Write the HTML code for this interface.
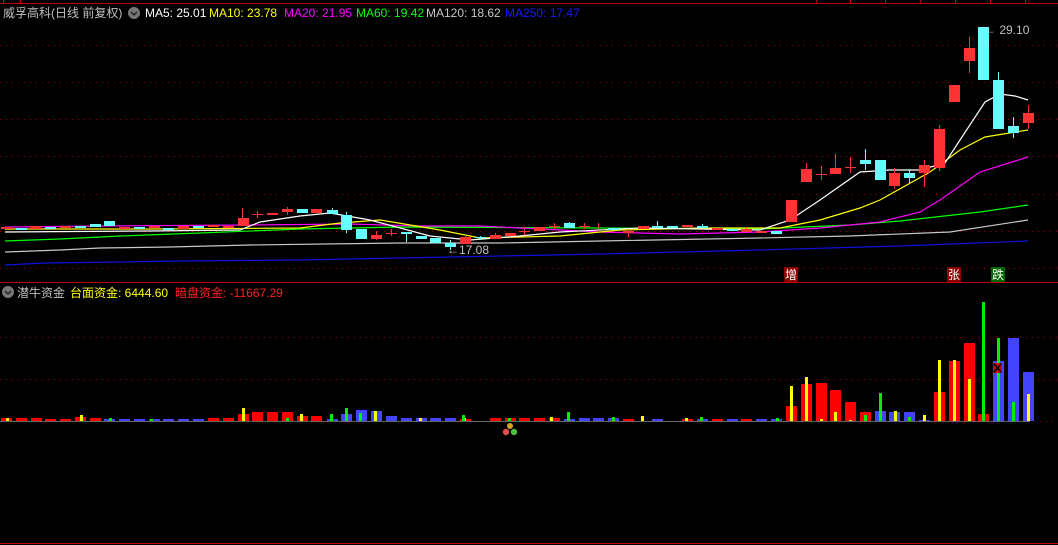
<!DOCTYPE html>
<html><head><meta charset="utf-8"><style>
html,body{margin:0;padding:0;background:#000;width:1058px;height:545px;overflow:hidden}
svg{display:block}
text{font-family:"Liberation Sans","Noto Sans CJK SC",sans-serif;font-size:12px}
</style></head><body>
<svg width="1058" height="545" viewBox="0 0 1058 545" xmlns="http://www.w3.org/2000/svg" shape-rendering="crispEdges">
<rect width="1058" height="545" fill="#000"/>
<!-- top border -->
<line x1="0" y1="3.5" x2="1058" y2="3.5" stroke="#c00000"/>
<g stroke="#c00000"><line x1="3.5" y1="0" x2="3.5" y2="3"/><line x1="20.5" y1="0" x2="20.5" y2="3"/><line x1="816.5" y1="0" x2="816.5" y2="3"/><line x1="850.5" y1="0" x2="850.5" y2="3"/><line x1="885.5" y1="0" x2="885.5" y2="3"/><line x1="920.5" y1="0" x2="920.5" y2="3"/><line x1="955.5" y1="0" x2="955.5" y2="3"/><line x1="990.5" y1="0" x2="990.5" y2="3"/><line x1="1025.5" y1="0" x2="1025.5" y2="3"/></g>
<!-- grid -->
<g stroke="#a00000" stroke-dasharray="1 5">
<line x1="0" y1="45.5" x2="1058" y2="45.5"/><line x1="0" y1="82.5" x2="1058" y2="82.5"/><line x1="0" y1="119.5" x2="1058" y2="119.5"/><line x1="0" y1="156.5" x2="1058" y2="156.5"/><line x1="0" y1="194.5" x2="1058" y2="194.5"/><line x1="0" y1="231.5" x2="1058" y2="231.5"/><line x1="0" y1="268.5" x2="1058" y2="268.5"/>
<line x1="0" y1="337.5" x2="1058" y2="337.5"/><line x1="0" y1="379.5" x2="1058" y2="379.5"/><line x1="1028" y1="421.5" x2="1058" y2="421.5"/>
</g>
<line x1="0" y1="282.5" x2="1058" y2="282.5" stroke="#c00000"/>
<line x1="0" y1="543.5" x2="1058" y2="543.5" stroke="#c00000"/>
<line x1="0" y1="421.5" x2="1030" y2="421.5" stroke="#666"/>

<!-- MA lines -->
<g fill="none" stroke-width="1.2" shape-rendering="auto">
<polyline stroke="#1010e0" points="5,265 45,263 120,262 180,261 300,260 400,258 600,254 760,250 900,246 1028,241"/>
<polyline stroke="#c8c8c8" points="5,252 60,250 100,248 170,247 250,245 400,243 500,243 600,241 760,238 850,236 950,232 1028,220"/>
<polyline stroke="#00ff00" points="5,241 60,239 120,236 200,233 300,229 400,227 600,228 760,229 850,225 900,221 980,212 1028,205"/>
<polyline stroke="#ff00ff" points="5,227 100,226 250,225 350,224 420,226 480,226 600,232 680,234 760,232 820,228 880,222 920,212 940,200 980,172 1028,157"/>
<polyline stroke="#ffff00" points="5,229 150,229 300,228 340,223 380,220 440,230 480,238 560,236 620,230 700,228 780,228 820,220 860,208 880,200 930,172 960,150 985,137 1028,130"/>
<polyline stroke="#ffffff" points="5,232 150,231 240,230 260,222 300,216 330,213 370,220 430,236 470,240 520,236 560,232 640,228 700,229 760,230 790,220 820,200 860,172 890,170 920,170 945,163 960,140 985,102 1000,94 1015,96 1028,100"/>
</g>

<!-- candles -->
<g>
<!-- left small candles -->
<g fill="#ff3333"><rect x="1" y="227" width="11" height="2"/><rect x="30" y="226" width="11" height="3"/><rect x="60" y="226" width="11" height="2"/><rect x="119" y="227" width="11" height="2"/><rect x="149" y="226" width="11" height="2"/><rect x="178" y="226" width="11" height="3"/><rect x="208" y="225" width="11" height="2"/><rect x="223" y="226" width="11" height="2"/></g>
<g fill="#66ffff"><rect x="16" y="228" width="11" height="2"/><rect x="45" y="227" width="11" height="2"/><rect x="75" y="226" width="11" height="2"/><rect x="90" y="224" width="11" height="3"/><rect x="104" y="221" width="11" height="5"/><rect x="134" y="227" width="11" height="2"/><rect x="163" y="228" width="11" height="2"/><rect x="193" y="226" width="11" height="2"/></g>
<!-- red bodies -->
<g fill="#ff3333">
<rect x="238" y="218" width="11" height="8"/><rect x="242" y="208" width="1" height="10"/>
<rect x="252" y="214" width="11" height="1"/><rect x="257" y="211" width="1" height="7"/>
<rect x="267" y="213" width="11" height="2"/>
<rect x="282" y="209" width="11" height="3"/><rect x="287" y="207" width="1" height="8"/>
<rect x="311" y="209" width="11" height="4"/>
<rect x="371" y="235" width="11" height="4"/><rect x="376" y="231" width="1" height="9"/>
<rect x="386" y="233" width="11" height="1"/><rect x="391" y="229" width="1" height="7"/>
<rect x="460" y="237" width="11" height="7"/><rect x="465" y="235" width="1" height="3"/>
<rect x="490" y="235" width="11" height="4"/><rect x="495" y="233" width="1" height="3"/>
<rect x="505" y="233" width="11" height="3"/>
<rect x="519" y="231" width="11" height="1"/><rect x="524" y="227" width="1" height="8"/>
<rect x="534" y="227" width="11" height="4"/>
<rect x="549" y="226" width="11" height="1"/><rect x="554" y="223" width="1" height="6"/>
<rect x="579" y="226" width="11" height="1"/><rect x="584" y="223" width="1" height="6"/>
<rect x="598" y="223" width="1" height="5"/>
<rect x="623" y="231" width="11" height="2"/><rect x="628" y="229" width="1" height="8"/>
<rect x="638" y="226" width="11" height="3"/>
<rect x="682" y="225" width="11" height="2"/>
<rect x="712" y="228" width="11" height="2"/>
<rect x="741" y="229" width="11" height="3"/><rect x="746" y="227" width="1" height="6"/>
<rect x="756" y="231" width="11" height="2"/>
<rect x="786" y="200" width="11" height="22"/>
<rect x="801" y="169" width="11" height="13"/><rect x="806" y="163" width="1" height="6"/>
<rect x="816" y="174" width="11" height="1"/><rect x="821" y="166" width="1" height="14"/>
<rect x="830" y="168" width="11" height="6"/><rect x="835" y="154" width="1" height="14"/>
<rect x="845" y="167" width="11" height="1"/><rect x="850" y="157" width="1" height="16"/>
<rect x="889" y="173" width="11" height="13"/><rect x="894" y="168" width="1" height="21"/>
<rect x="919" y="165" width="11" height="8"/><rect x="924" y="160" width="1" height="27"/>
<rect x="934" y="129" width="11" height="39"/><rect x="939" y="125" width="1" height="46"/>
<rect x="949" y="85" width="11" height="17"/>
<rect x="964" y="48" width="11" height="13"/><rect x="969" y="37" width="1" height="36"/>
<rect x="1023" y="113" width="11" height="10"/><rect x="1028" y="105" width="1" height="24"/>
</g>
<g fill="#66ffff">
<rect x="297" y="209" width="11" height="4"/>
<rect x="327" y="210" width="11" height="4"/><rect x="332" y="208" width="1" height="2"/>
<rect x="341" y="215" width="11" height="15"/><rect x="346" y="212" width="1" height="21"/>
<rect x="356" y="229" width="11" height="10"/>
<rect x="401" y="232" width="11" height="2"/><rect x="406" y="232" width="1" height="10"/>
<rect x="416" y="236" width="11" height="3"/>
<rect x="430" y="238" width="11" height="5"/>
<rect x="445" y="243" width="11" height="4"/><rect x="450" y="240" width="1" height="10"/>
<rect x="475" y="237" width="11" height="1"/><rect x="480" y="236" width="1" height="4"/>
<rect x="564" y="223" width="11" height="5"/><rect x="569" y="222" width="1" height="1"/>
<rect x="608" y="228" width="11" height="2"/>
<rect x="652" y="226" width="11" height="2"/><rect x="657" y="221" width="1" height="5"/>
<rect x="667" y="226" width="11" height="2"/>
<rect x="697" y="226" width="11" height="2"/><rect x="702" y="224" width="1" height="2"/>
<rect x="727" y="229" width="11" height="2"/>
<rect x="771" y="231" width="11" height="3"/>
<rect x="860" y="160" width="11" height="4"/><rect x="865" y="149" width="1" height="21"/>
<rect x="875" y="160" width="11" height="20"/>
<rect x="904" y="173" width="11" height="5"/><rect x="909" y="169" width="1" height="14"/>
<rect x="978" y="27" width="11" height="53"/>
<rect x="993" y="80" width="11" height="49"/><rect x="998" y="72" width="1" height="8"/>
<rect x="1008" y="126" width="11" height="7"/><rect x="1013" y="117" width="1" height="21"/>
</g>
</g>
<!-- labels -->
<text x="447" y="254" fill="#c0c0c0">←17.08</text>
<text x="984" y="34" fill="#c0c0c0">← 29.10</text>
<rect x="784" y="267" width="14" height="15" fill="#8b0000"/><text x="785" y="279" fill="#fff">增</text>
<rect x="947" y="267" width="14" height="15" fill="#8b0000"/><text x="948" y="279" fill="#fff">张</text>
<rect x="991" y="267" width="14" height="15" fill="#006400"/><text x="992" y="279" fill="#fff">跌</text>

<!-- header -->
<text x="3" y="17" fill="#c0c0c0">威孚高科(日线 前复权)</text>
<circle cx="134" cy="13" r="6" fill="#777"/><path d="M131 12 l3 3 l3 -3" stroke="#222" stroke-width="1.5" fill="none" shape-rendering="auto"/>
<text x="145" y="17" fill="#ffffff">MA5: 25.01</text>
<text x="209" y="17" fill="#ffff00">MA10: 23.78</text>
<text x="284" y="17" fill="#ff00ff">MA20: 21.95</text>
<text x="356" y="17" fill="#00ff00">MA60: 19.42</text>
<text x="426" y="17" fill="#c8c8c8">MA120: 18.62</text>
<text x="505" y="17" fill="#1a1aff">MA250: 17.47</text>

<text x="17" y="297" fill="#c0c0c0">潜牛资金</text>
<circle cx="8" cy="292" r="6" fill="#777"/><path d="M5 291 l3 3 l3 -3" stroke="#222" stroke-width="1.5" fill="none" shape-rendering="auto"/>
<text x="70" y="297" fill="#ffff00">台面资金: 6444.60</text>
<text x="175" y="297" fill="#ff2020">暗盘资金: -11667.29</text>

<!-- lower bars -->
<g fill="#ff0000">
<rect x="1" y="418" width="11" height="3"/><rect x="16" y="418" width="11" height="3"/><rect x="31" y="418" width="11" height="3"/><rect x="45" y="419" width="11" height="2"/><rect x="60" y="419" width="11" height="2"/><rect x="75" y="417" width="11" height="4"/><rect x="90" y="418" width="11" height="3"/>
<rect x="208" y="418" width="11" height="3"/><rect x="223" y="418" width="11" height="3"/><rect x="238" y="414" width="11" height="7"/><rect x="252" y="412" width="11" height="9"/><rect x="267" y="412" width="11" height="9"/><rect x="282" y="412" width="11" height="9"/><rect x="297" y="416" width="11" height="5"/><rect x="311" y="416" width="11" height="5"/>
<rect x="460" y="419" width="11" height="2"/><rect x="490" y="418" width="11" height="3"/><rect x="505" y="418" width="11" height="3"/><rect x="519" y="418" width="11" height="3"/><rect x="534" y="418" width="11" height="3"/><rect x="549" y="418" width="11" height="3"/>
<rect x="623" y="419" width="11" height="2"/><rect x="682" y="419" width="11" height="2"/><rect x="712" y="419" width="11" height="2"/><rect x="741" y="419" width="11" height="2"/>
<rect x="786" y="406" width="11" height="15"/><rect x="801" y="384" width="11" height="37"/><rect x="816" y="383" width="11" height="38"/><rect x="830" y="390" width="11" height="31"/><rect x="845" y="402" width="11" height="19"/><rect x="860" y="412" width="11" height="9"/>
<rect x="934" y="392" width="11" height="29"/><rect x="949" y="361" width="11" height="60"/><rect x="964" y="343" width="11" height="78"/><rect x="978" y="414" width="11" height="7"/>
</g>
<g fill="#4444ff">
<rect x="104" y="419" width="11" height="2"/><rect x="119" y="419" width="11" height="2"/><rect x="134" y="419" width="11" height="2"/><rect x="149" y="419" width="11" height="2"/><rect x="163" y="419" width="11" height="2"/><rect x="178" y="419" width="11" height="2"/><rect x="193" y="419" width="11" height="2"/>
<rect x="327" y="419" width="11" height="2"/><rect x="341" y="414" width="11" height="7"/><rect x="356" y="410" width="11" height="11"/><rect x="371" y="411" width="11" height="10"/><rect x="386" y="416" width="11" height="5"/><rect x="401" y="418" width="11" height="3"/><rect x="416" y="418" width="11" height="3"/><rect x="430" y="418" width="11" height="3"/><rect x="445" y="418" width="11" height="3"/>
<rect x="564" y="419" width="11" height="2"/><rect x="579" y="418" width="11" height="3"/><rect x="593" y="418" width="11" height="3"/><rect x="608" y="418" width="11" height="3"/><rect x="652" y="419" width="11" height="2"/><rect x="697" y="419" width="11" height="2"/><rect x="727" y="419" width="11" height="2"/><rect x="756" y="419" width="11" height="2"/><rect x="771" y="419" width="11" height="2"/>
<rect x="875" y="411" width="11" height="10"/><rect x="889" y="412" width="11" height="9"/><rect x="904" y="412" width="11" height="9"/><rect x="919" y="420" width="11" height="1"/>
<rect x="993" y="361" width="11" height="60"/><rect x="1008" y="338" width="11" height="83"/><rect x="1023" y="372" width="11" height="49"/>
</g>
<g fill="#ffff00">
<rect x="6" y="418" width="3" height="3"/><rect x="80" y="415" width="3" height="6"/><rect x="242" y="408" width="3" height="13"/><rect x="300" y="414" width="3" height="7"/><rect x="374" y="411" width="3" height="10"/><rect x="419" y="418" width="3" height="3"/><rect x="463" y="418" width="3" height="3"/><rect x="550" y="417" width="3" height="4"/><rect x="641" y="416" width="3" height="5"/><rect x="685" y="418" width="3" height="3"/>
<rect x="790" y="386" width="3" height="35"/><rect x="805" y="377" width="3" height="44"/><rect x="820" y="419" width="3" height="2"/><rect x="834" y="412" width="3" height="9"/><rect x="849" y="420" width="3" height="1"/><rect x="894" y="411" width="3" height="10"/><rect x="923" y="415" width="3" height="6"/><rect x="938" y="360" width="3" height="61"/><rect x="953" y="360" width="3" height="61"/><rect x="968" y="379" width="3" height="42"/><rect x="1027" y="394" width="3" height="27"/>
</g>
<g fill="#00ee00">
<rect x="109" y="418" width="3" height="3"/><rect x="150" y="419" width="3" height="2"/><rect x="286" y="418" width="3" height="3"/><rect x="330" y="414" width="3" height="7"/><rect x="345" y="408" width="3" height="13"/><rect x="359" y="413" width="3" height="8"/><rect x="462" y="415" width="3" height="6"/><rect x="508" y="418" width="3" height="3"/><rect x="567" y="412" width="3" height="9"/><rect x="612" y="417" width="3" height="4"/><rect x="700" y="417" width="3" height="4"/><rect x="776" y="418" width="3" height="3"/>
<rect x="864" y="415" width="3" height="6"/><rect x="879" y="393" width="3" height="28"/><rect x="908" y="417" width="3" height="4"/><rect x="982" y="302" width="3" height="119"/><rect x="997" y="338" width="3" height="83"/><rect x="1012" y="402" width="3" height="19"/>
</g>
<!-- X marker -->
<rect x="993" y="363" width="9" height="10" fill="#cc0000"/><path d="M994 364 l7 8 M1001 364 l-7 8" stroke="#000" stroke-width="1.5" shape-rendering="auto"/>
<!-- balls -->
<g shape-rendering="auto"><circle cx="510" cy="426" r="3" fill="#d4a020"/><circle cx="506" cy="432" r="3.2" fill="#e05050"/><circle cx="514" cy="432" r="3.2" fill="#50c040"/></g>
</svg>
</body></html>
